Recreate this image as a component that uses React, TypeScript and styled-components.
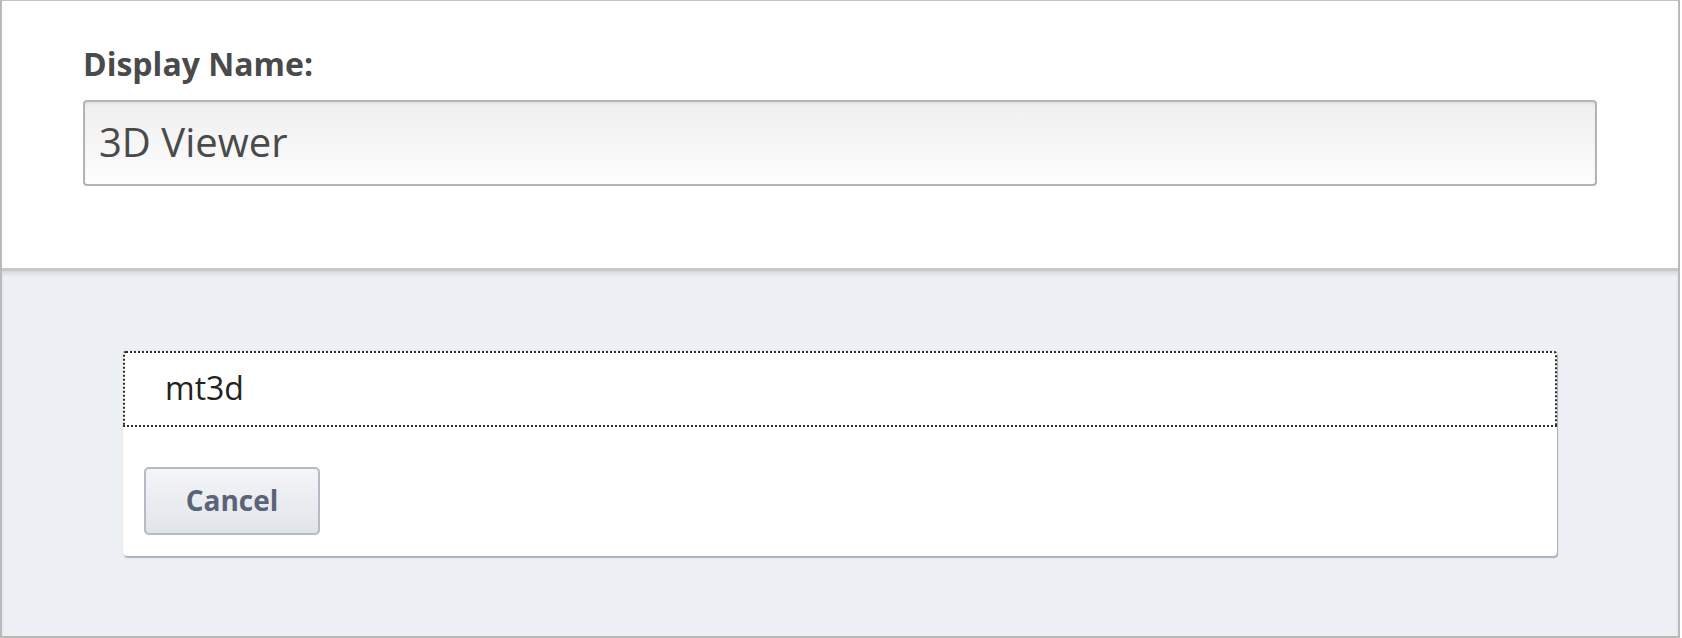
import React from "react";
import styled, { createGlobalStyle } from "styled-components";

const Global = createGlobalStyle`
  html, body { margin: 0; padding: 0; background: #ffffff; }
  body { font-family: "Open Sans", "Liberation Sans", sans-serif; }
  * { box-sizing: border-box; }
`;

const Frame = styled.div`
  width: 1680px;
  height: 638px;
  border-left: 2px solid #b9b9b9;
  border-right: 2px solid #b9b9b9;
  border-top: 1px solid #c4c4c4;
  border-bottom: 2px solid #b9b9b9;
  display: flex;
  flex-direction: column;
  overflow: hidden;
`;

const TopSection = styled.section`
  height: 267px;
  flex: none;
  background: #ffffff;
  padding: 45px 81px 0 81px;
  display: flex;
  flex-direction: column;
`;

const Label = styled.label`
  font-size: 32px;
  line-height: 36px;
  font-weight: 700;
  color: #4a4a4a;
  margin-bottom: 18px;
`;

const NameInput = styled.div`
  width: 1514px;
  height: 86px;
  border: 2px solid #b4b4b4;
  border-radius: 4px;
  background: linear-gradient(#efefef, #fdfdfd);
  box-shadow: inset 0 2px 3px rgba(0, 0, 0, 0.05);
  padding: 0 14px 4px 14px;
  display: flex;
  align-items: center;
  font-size: 40px;
  color: #4a4a4a;
`;

const BottomSection = styled.section`
  flex: 1;
  background: #eceff4;
  border-top: 3px solid #c9c9c9;
  box-shadow: inset 0 4px 5px -2px rgba(0, 0, 0, 0.12);
  padding: 80px 121px 0 121px;
`;

const Card = styled.div`
  width: 1434px;
  height: 205px;
  background: #ffffff;
  border-radius: 4px;
  box-shadow: 1px 2px 1px rgba(120, 128, 142, 0.55), 0 0 1px rgba(120, 128, 142, 0.5);
  display: flex;
  flex-direction: column;
`;

const SelectedRow = styled.div`
  height: 76px;
  border: 2px dotted #2e2e2e;
  border-radius: 3px 3px 0 0;
  padding: 0 40px 4px 40px;
  display: flex;
  align-items: center;
  font-size: 32px;
  color: #222222;
`;

const Actions = styled.div`
  flex: 1;
  padding: 40px 21px 21px 21px;
  display: flex;
  align-items: flex-start;
`;

const Button = styled.button`
  width: 176px;
  height: 68px;
  border: 2px solid #b5bbc6;
  border-radius: 5px;
  background: linear-gradient(#f4f5f7, #e1e4ea);
  font-family: "Open Sans", "Liberation Sans", sans-serif;
  font-size: 28px;
  font-weight: 700;
  color: #5a6377;
  padding: 0 0 2px 0;
  cursor: pointer;
`;

export default function App() {
  return (
    <>
      <Global />
      <Frame>
        <TopSection>
          <Label>Display Name:</Label>
          <NameInput>3D Viewer</NameInput>
        </TopSection>
        <BottomSection>
          <Card>
            <SelectedRow>mt3d</SelectedRow>
            <Actions>
              <Button>Cancel</Button>
            </Actions>
          </Card>
        </BottomSection>
      </Frame>
    </>
  );
}
